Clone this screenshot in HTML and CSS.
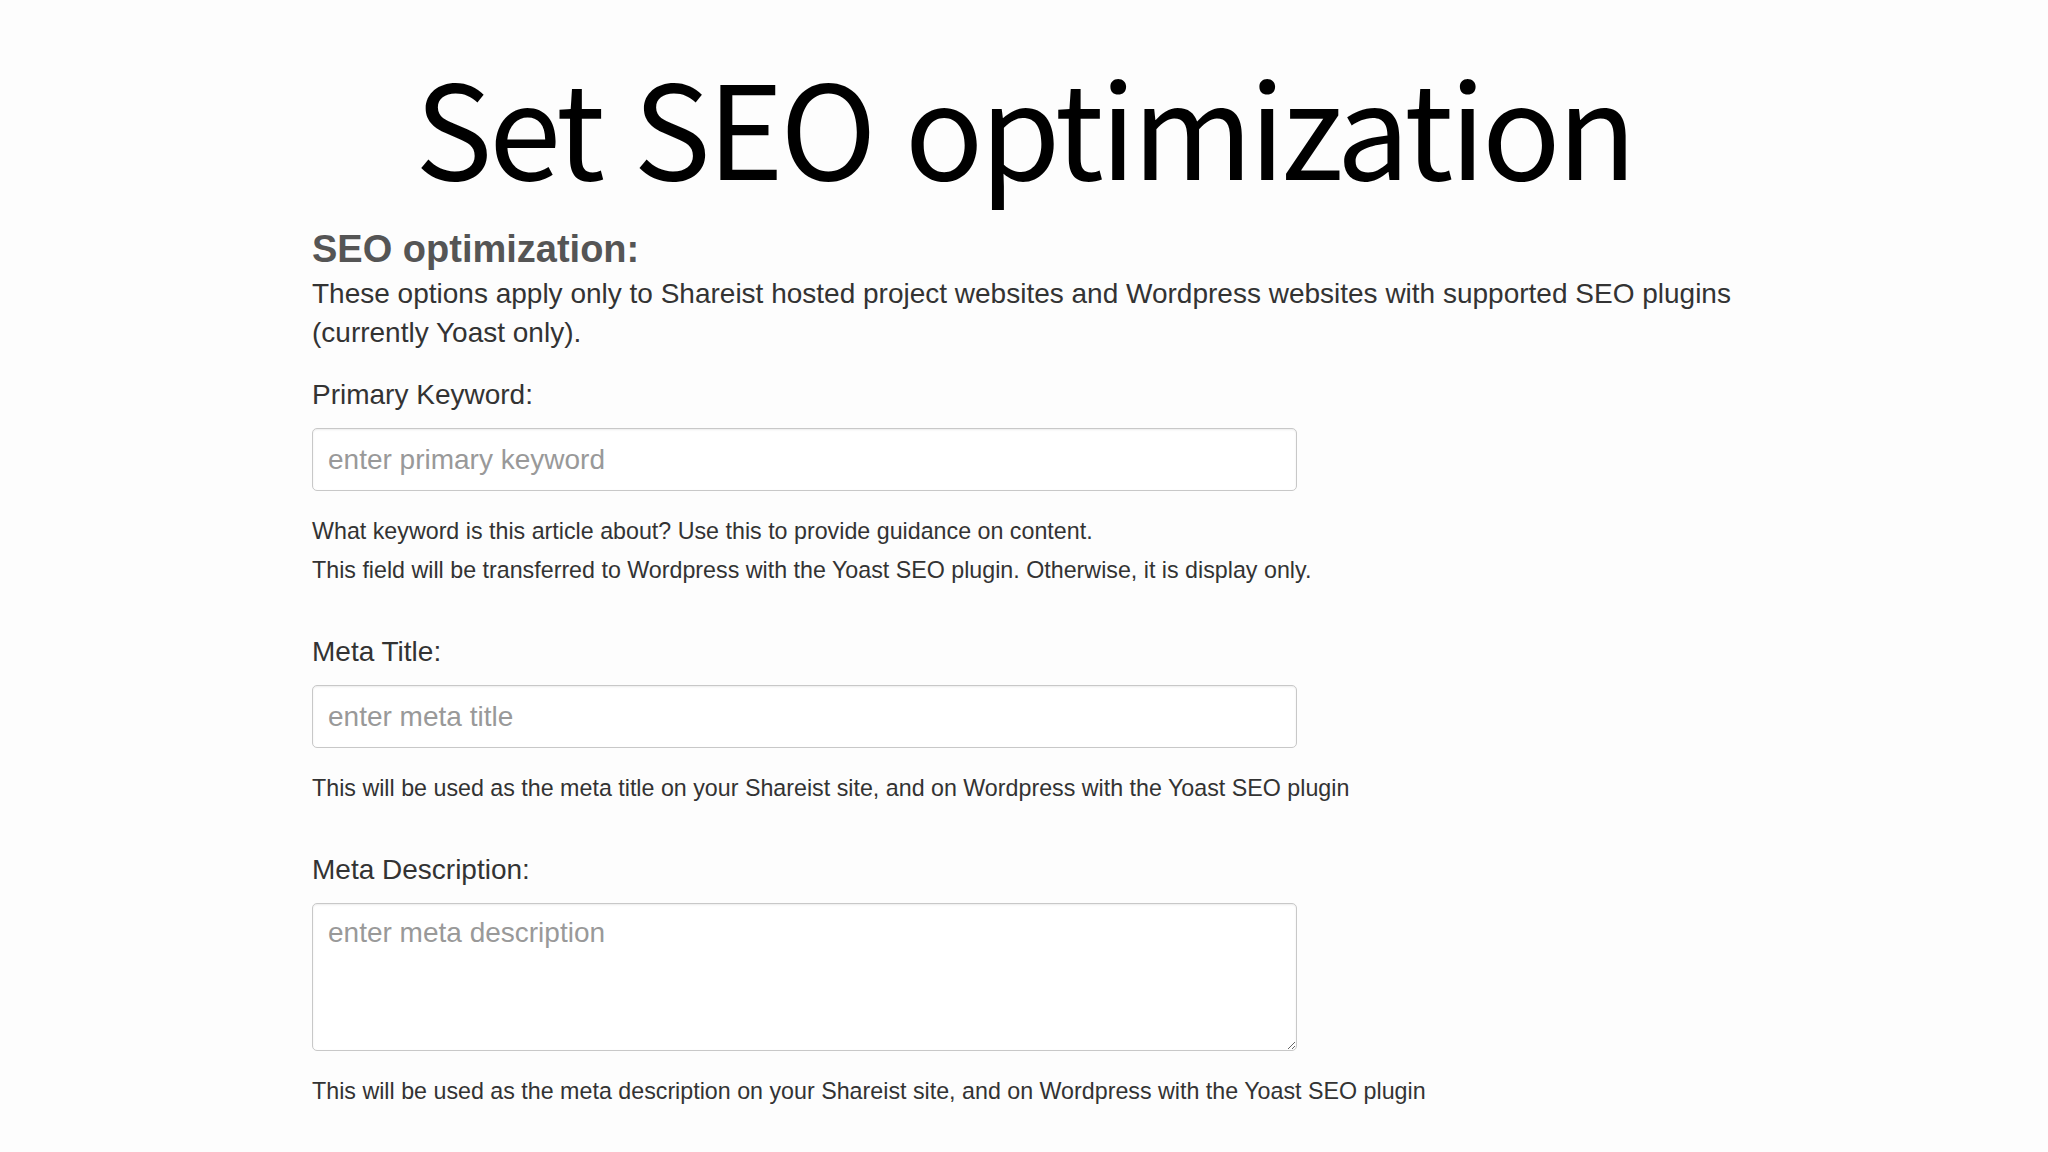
FILE: index.html
```html
<!DOCTYPE html>
<html lang="en">
<head>
<meta charset="utf-8">
<title>Set SEO optimization</title>
<link rel="stylesheet" href="styles.css">
</head>
<body>
<main class="slide">
  <h1 class="slide-title">Set SEO optimization</h1>
  <section class="seo-form">
    <h2 class="seo-heading">SEO optimization:</h2>
    <p class="seo-intro">These options apply only to Shareist hosted project websites and Wordpress websites with supported SEO plugins (currently Yoast only).</p>

    <div class="field">
      <label class="field-label" for="kw">Primary Keyword:</label>
      <input class="field-input" id="kw" type="text" placeholder="enter primary keyword">
      <div class="field-help">
        <p>What keyword is this article about? Use this to provide guidance on content.</p>
        <p>This field will be transferred to Wordpress with the Yoast SEO plugin. Otherwise, it is display only.</p>
      </div>
    </div>

    <div class="field">
      <label class="field-label" for="mt">Meta Title:</label>
      <input class="field-input" id="mt" type="text" placeholder="enter meta title">
      <div class="field-help">
        <p>This will be used as the meta title on your Shareist site, and on Wordpress with the Yoast SEO plugin</p>
      </div>
    </div>

    <div class="field">
      <label class="field-label" for="md">Meta Description:</label>
      <textarea class="field-input field-textarea" id="md" placeholder="enter meta description"></textarea>
      <div class="field-help">
        <p>This will be used as the meta description on your Shareist site, and on Wordpress with the Yoast SEO plugin</p>
      </div>
    </div>
  </section>
</main>
</body>
</html>
```
FILE: styles.css
```css
html, body {
  margin: 0;
  padding: 0;
  background: #fdfdfd;
}

.slide {
  width: 2048px;
  height: 1152px;
  overflow: hidden;
  display: flex;
  flex-direction: column;
}

.slide-title {
  margin: 58px 0 0 0;
  font-family: "Noto Sans CJK KR", "Noto Sans", sans-serif;
  font-weight: 400;
  font-size: 130px;
  line-height: 130px;
  letter-spacing: -3.5px;
  word-spacing: 6px;
  color: #000;
  text-align: center;
}

.seo-form {
  padding-left: 312px;
  font-family: "Liberation Sans", Arial, sans-serif;
  color: #333;
}

.seo-heading {
  margin: 39px 0 0 0;
  font-size: 38px;
  line-height: 44px;
  font-weight: 700;
  color: #555;
}

.seo-intro {
  margin: 3px 0 0 0;
  width: 1460px;
  font-size: 28px;
  line-height: 39px;
}

.field {
  display: flex;
  flex-direction: column;
  align-items: flex-start;
  margin-top: 26px;
}

.field + .field {
  margin-top: 45.5px;
}

.field-label {
  font-size: 28px;
  line-height: 34px;
  margin-bottom: 16px;
}

.field-input {
  box-sizing: border-box;
  width: 985px;
  height: 63px;
  margin: 0;
  padding: 0 15px;
  border: 1px solid #c8c8c8;
  border-radius: 5px;
  background: #fff;
  box-shadow: inset 0 1px 2px rgba(0, 0, 0, 0.08);
  font-family: "Liberation Sans", Arial, sans-serif;
  font-size: 28px;
  color: #555;
  outline: none;
}

.field-input::placeholder {
  color: #999;
}

.field-textarea {
  height: 148px;
  padding: 12px 15px;
  line-height: 34px;
  resize: both;
}

.field-help {
  margin-top: 20.5px;
  font-size: 23.25px;
  line-height: 39px;
}

.field-help p {
  margin: 0;
}
```
